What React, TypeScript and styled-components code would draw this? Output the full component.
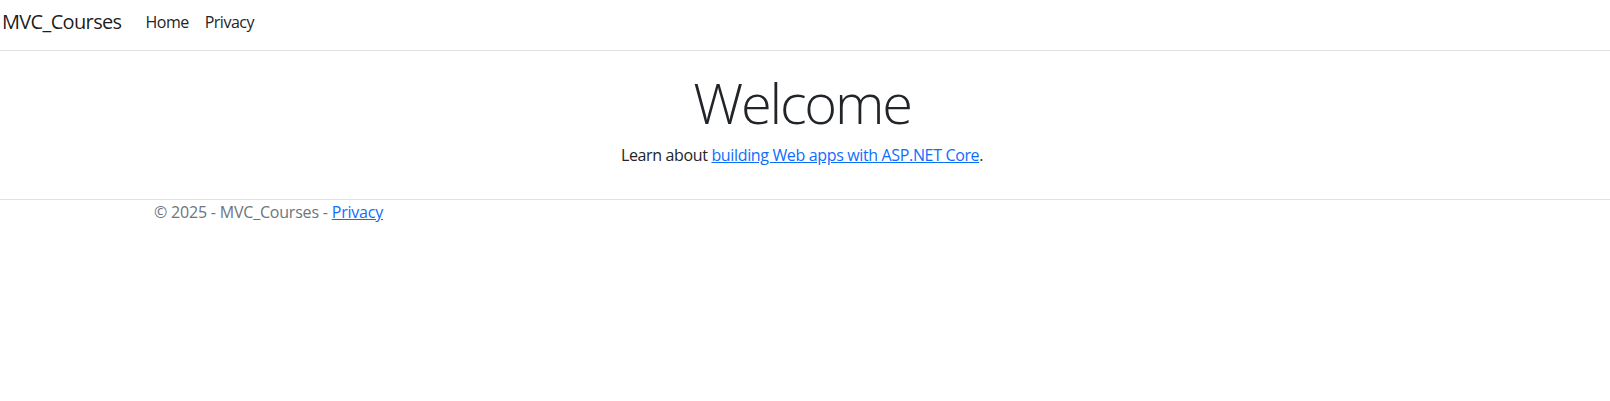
import React from "react";
import styled, { createGlobalStyle } from "styled-components";

const Global = createGlobalStyle`
  *, *::before, *::after { box-sizing: border-box; }
  html, body { margin: 0; padding: 0; background: #fff; }
  body {
    font-family: "Segoe UI", "Open Sans", "Noto Sans", sans-serif;
    font-size: 16px;
    line-height: 1.5;
    color: #212529;
  }
`;

const Navbar = styled.nav`
  display: flex;
  align-items: center;
  height: 51px;
  padding: 0 2px 7px;
  border-bottom: 1px solid #dee2e6;
`;

const Brand = styled.a`
  font-size: 20px;
  line-height: 30px;
  letter-spacing: -0.65px;
  color: rgba(0, 0, 0, 0.9);
  text-decoration: none;
  margin-right: 16px;
`;

const NavList = styled.ul`
  display: flex;
  list-style: none;
  margin: 0;
  padding: 0;
`;

const NavLink = styled.a`
  display: block;
  padding: 8px;
  color: #212529;
  text-decoration: none;
  font-size: 16px;
  line-height: 24px;
  letter-spacing: -0.5px;
`;

const Main = styled.main`
  text-align: center;
  padding: 18px 6px 16px 0;
`;

const Title = styled.h1`
  margin: 0 0 7px;
  font-size: 56px;
  font-weight: 300;
  line-height: 1.2;
  letter-spacing: -2.2px;
`;

const Lead = styled.p`
  margin: 0;
  letter-spacing: -0.35px;
`;

const Link = styled.a`
  color: #0d6efd;
  text-decoration: underline;
`;

const Footer = styled.footer`
  border-top: 1px solid #dee2e6;
  color: #6c757d;
  margin-top: 16px;
`;

const Container = styled.div`
  max-width: 1320px;
  margin: 0 auto;
  padding: 0 9px;
  line-height: 24px;
  letter-spacing: -0.2px;
`;

export default function App() {
  return (
    <>
      <Global />
      <header>
        <Navbar>
          <Brand href="#">MVC_Courses</Brand>
          <NavList>
            <li><NavLink href="#">Home</NavLink></li>
            <li><NavLink href="#">Privacy</NavLink></li>
          </NavList>
        </Navbar>
      </header>
      <Main>
        <Title>Welcome</Title>
        <Lead>
          Learn about <Link href="#">building Web apps with ASP.NET Core</Link>.
        </Lead>
      </Main>
      <Footer>
        <Container>
          &copy; 2025 - MVC_Courses - <Link href="#">Privacy</Link>
        </Container>
      </Footer>
    </>
  );
}
